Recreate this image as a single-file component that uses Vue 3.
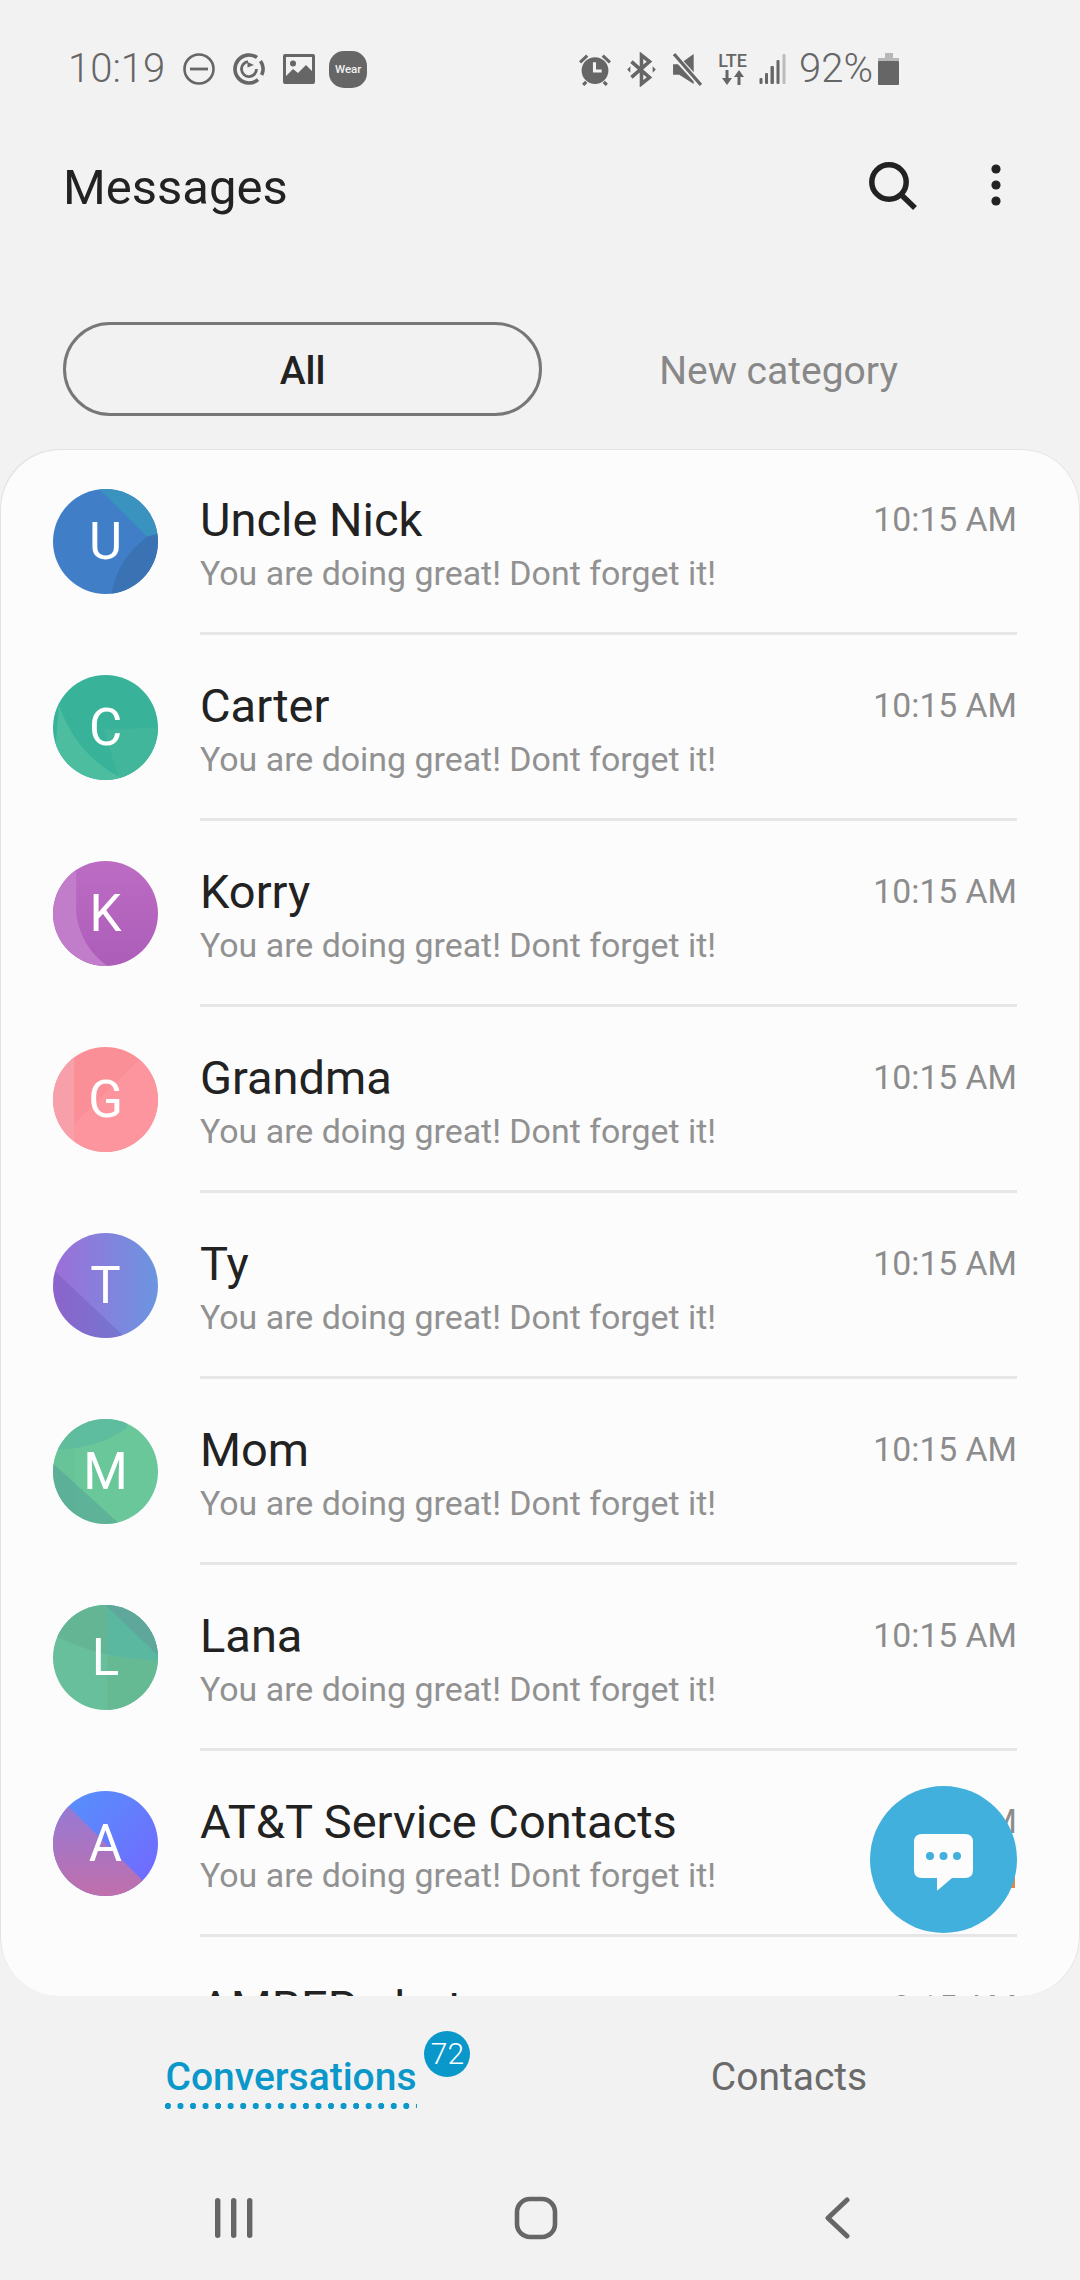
<script setup>
const msg = 'You are doing great! Dont forget it!'

const threads = [
  {
    name: 'Uncle Nick', letter: 'U', time: '10:15 AM', base: '#407fc8',
    shapes: [
      { d: 'M46 0 L94 48 L104 44 L104 0 Z', fill: '#3a93bf' },
      { d: 'M94 47 Q64 68 58 104 L104 104 L104 44 Z', fill: '#3a72b4' },
    ],
  },
  {
    name: 'Carter', letter: 'C', time: '10:15 AM', base: '#39b29a',
    shapes: [
      { d: 'M50 54 L104 52 L104 104 L66 104 Z', fill: '#41b69b' },
      { d: 'M6 30 Q24 82 72 104 L0 104 Z', fill: '#4cbe9f' },
    ],
  },
  {
    name: 'Korry', letter: 'K', time: '10:15 AM', base: 'url(#gKorry)',
    shapes: [
      { d: 'M0 0 L23 0 L23 52 Q28 86 54 104 L0 104 Z', fill: '#c17cca' },
    ],
  },
  {
    name: 'Grandma', letter: 'G', time: '10:15 AM', base: '#fb8f97',
    shapes: [
      { d: 'M21 76 L86 12 L104 12 L104 104 L21 104 Z', fill: '#fd959f' },
      { d: 'M0 0 L21 0 L21 104 L0 104 Z', fill: '#f8a0a9' },
    ],
  },
  {
    name: 'Ty', letter: 'T', time: '10:15 AM', base: 'url(#gTy)',
    shapes: [
      { d: 'M0 36 L72 104 L0 104 Z', fill: '#5a42a8', opacity: 0.25 },
    ],
  },
  {
    name: 'Mom', letter: 'M', time: '10:15 AM', base: '#6ac79a',
    shapes: [
      { d: 'M0 0 L76 0 L72 10 Q42 30 4 30 Z', fill: '#5ebc9f' },
      { d: 'M0 0 L22 0 L22 104 L0 104 Z', fill: '#63bd97', opacity: 0.4 },
      { d: 'M0 44 L66 104 L0 104 Z', fill: '#57a398', opacity: 0.6 },
    ],
  },
  {
    name: 'Lana', letter: 'L', time: '10:15 AM', base: '#68bf9b',
    shapes: [
      { d: 'M54 50 L104 55 L104 104 L54 104 Z', fill: '#65ba94' },
      { d: 'M0 0 L54 0 L54 49 Q30 44 0 30 Z', fill: '#64b594' },
      { d: 'M54 0 L104 0 L104 55 Q80 54 54 49 Z', fill: '#5ab7a0' },
      { d: 'M52 0 L104 50 L104 0 Z', fill: '#5fa79b' },
    ],
  },
  {
    name: 'AT&T Service Contacts', letter: 'A', time: '9:15 AM', base: 'url(#gAtBlue)', flag: true,
    shapes: [
      { d: 'M0 0 L104 104 L0 104 Z', fill: 'url(#gAtRose)' },
    ],
  },
  { name: 'AMBER alerts', letter: '', time: '9:15 AM', base: 'none', shapes: [] },
]
</script>

<template>
  <div class="screen">
    <svg class="defs" width="0" height="0" aria-hidden="true">
      <defs>
        <linearGradient id="gKorry" x1="0" y1="0" x2="0" y2="1">
          <stop offset="0" stop-color="#bc6cc3" />
          <stop offset="1" stop-color="#ac5db8" />
        </linearGradient>
        <linearGradient id="gTy" x1="0" y1="0" x2="1" y2="0">
          <stop offset="0" stop-color="#9d6ed8" />
          <stop offset="1" stop-color="#6b95e0" />
        </linearGradient>
        <linearGradient id="gAtBlue" x1="0" y1="0" x2="1" y2="1">
          <stop offset="0" stop-color="#5394fb" />
          <stop offset="1" stop-color="#7565ff" />
        </linearGradient>
        <linearGradient id="gAtRose" x1="0" y1="0" x2="0" y2="1">
          <stop offset="0" stop-color="#8f7bdb" />
          <stop offset="1" stop-color="#c06fab" />
        </linearGradient>
      </defs>
    </svg>

    <div class="status">
      <div class="status-left">
        <span class="clock">10:19</span>
        <svg width="32" height="32" viewBox="0 0 32 32">
          <circle cx="16" cy="16" r="14.5" fill="none" stroke="#666" stroke-width="2.6" />
          <rect x="7" y="14.6" width="18" height="2.8" fill="#666" />
        </svg>
        <svg width="32" height="32" viewBox="0 0 32 32" fill="none" stroke="#666">
          <path d="M24 4.500 A14 14 0 1 0 25 26.700" stroke-width="3.600" />
          <path d="M27.500 8 A14 14 0 0 1 28.700 21.900" stroke-width="3.600" />
          <path d="M15 8.600 A7.500 7.500 0 1 0 23.500 16" stroke-width="2.800" />
          <path d="M21 12 L14.500 14.500 L14.500 9 Z" fill="#666" stroke="none" />
        </svg>
        <svg width="32" height="30" viewBox="0 0 32 30">
          <path fill="#666" fill-rule="evenodd" d="M2 0 H30 Q32 0 32 2 V28 Q32 30 30 30 H2 Q0 30 0 28 V2 Q0 0 2 0 Z M3 3 V22 L10 15 L15 19 L23 11 L29 17 V3 Z" />
          <circle cx="10" cy="9.500" r="3" fill="#666" />
        </svg>
        <div class="wear"><span>Wear</span></div>
      </div>
      <div class="status-right">
        <svg width="34" height="33" viewBox="0 0 33 32">
          <circle cx="16.500" cy="17" r="13" fill="#666" />
          <path d="M16 9 V17.500 H23" fill="none" stroke="#f2f2f2" stroke-width="3" />
          <path d="M2 9 L9 2.500 M31 9 L24 2.500 M5 31 L8 28 M28 31 L25 28" stroke="#666" stroke-width="3" />
        </svg>
        <svg width="29" height="35" viewBox="0 0 27 33" fill="none" stroke="#666" stroke-width="3.400">
          <path d="M4 9 L21 24 L13.500 30 V3 L21 9 L4 24" />
          <path d="M0 16.500 L3 13.500 V19.500 Z M27 16.500 L24 13.500 V19.500 Z" fill="#666" stroke="none" />
        </svg>
        <svg class="mute" width="29" height="33" viewBox="0 0 28 32">
          <path fill="#666" d="M0 11 H6 L20 1 V30 L6 21 H0 Z" />
          <path d="M-1 0 L29 33" stroke="#f2f2f2" stroke-width="6" />
          <path d="M1 1 L27 31" stroke="#666" stroke-width="3" />
        </svg>
        <div class="lte">
          <span>LTE</span>
          <svg width="24" height="16" viewBox="0 0 24 16" fill="#666">
            <path d="M4.500 0 H7.500 V8 H11 L6 15 L1 8 H4.500 Z" />
            <path d="M16.500 15 H19.500 V7 H23 L18 0 L13 7 H16.500 Z" />
          </svg>
        </div>
        <svg class="signal" width="27" height="30" viewBox="0 0 26 30">
          <rect x="0" y="24" width="3" height="6" rx="1" fill="#666" />
          <rect x="5.500" y="19" width="3" height="11" rx="1" fill="#666" />
          <rect x="11" y="12" width="3.400" height="18" rx="1" fill="#666" />
          <rect x="17" y="6" width="3" height="24" rx="1" fill="#666" />
          <rect x="23" y="0" width="3" height="30" rx="1" fill="#bbb" />
        </svg>
        <span class="pct">92%</span>
        <svg class="batt" width="21" height="32" viewBox="0 0 21 32">
          <rect x="7" y="0" width="8" height="6" fill="#b8b8b8" />
          <rect x="0" y="5" width="21" height="3" fill="#b8b8b8" />
          <rect x="0" y="8" width="21" height="24" rx="1" fill="#666" />
        </svg>
      </div>
    </div>

    <div class="header">
      <span class="title">Messages</span>
      <div class="actions">
        <svg width="52" height="54" viewBox="0 0 52 54" fill="none" stroke="#222" stroke-width="5.500">
          <circle cx="23" cy="24" r="17.200" />
          <path d="M35.500 37 L49 50" />
        </svg>
        <svg width="10" height="42" viewBox="0 0 10 42" fill="#222">
          <circle cx="5" cy="5" r="4.600" />
          <circle cx="5" cy="21" r="4.600" />
          <circle cx="5" cy="37" r="4.600" />
        </svg>
      </div>
    </div>

    <div class="filters">
      <div class="filter active">All</div>
      <div class="filter">New category</div>
    </div>

    <div class="card">
      <div v-for="t in threads" :key="t.name" class="row">
        <div class="avatar">
          <svg width="105" height="105" viewBox="0 0 104 104">
            <rect width="104" height="104" :fill="t.base" />
            <path v-for="(s, i) in t.shapes" :key="i" :d="s.d" :fill="s.fill" :opacity="s.opacity" />
          </svg>
          <span v-if="t.letter" class="letter">{{ t.letter }}</span>
        </div>
        <div class="body">
          <div class="line">
            <span class="name">{{ t.name }}</span>
            <span class="time">{{ t.time }}</span>
          </div>
          <div class="sub">{{ msg }}</div>
          <span v-if="t.flag" class="flag"></span>
        </div>
      </div>
      <div class="fab">
        <svg width="147" height="147" viewBox="0 0 147 147">
          <path fill="#fcfcfc" d="M52 48 H95 Q103 48 103 56 V84 Q103 92 95 92 H82 L68 104 Q67 105 67 103 V92 H52 Q44 92 44 84 V56 Q44 48 52 48 Z" />
          <circle cx="60" cy="70" r="4" fill="#42b0dc" />
          <circle cx="73.500" cy="70" r="4" fill="#42b0dc" />
          <circle cx="87" cy="70" r="4" fill="#42b0dc" />
        </svg>
      </div>
    </div>

    <div class="tabs">
      <div class="tab">
        <div class="tab-on">
          <span>Conversations</span>
          <div class="dots"></div>
          <span class="badge">72</span>
        </div>
      </div>
      <div class="tab">Contacts</div>
    </div>

    <div class="nav">
      <div class="nav-cell">
        <svg width="38" height="44" viewBox="0 0 38 44" fill="#666">
          <rect x="0" y="2" width="5.400" height="40" rx="2.700" />
          <rect x="16" y="2" width="5.400" height="40" rx="2.700" />
          <rect x="32" y="2" width="5.400" height="40" rx="2.700" />
        </svg>
      </div>
      <div class="nav-cell">
        <svg width="44" height="44" viewBox="0 0 44 44">
          <rect x="3" y="3" width="38" height="38" rx="13" fill="none" stroke="#666" stroke-width="4.600" />
        </svg>
      </div>
      <div class="nav-cell">
        <svg width="26" height="44" viewBox="0 0 26 44">
          <path d="M22 4 L3 22 L22 40" fill="none" stroke="#666" stroke-width="5" stroke-linecap="round" stroke-linejoin="round" />
        </svg>
      </div>
    </div>
  </div>
</template>

<style>
html, body {
  margin: 0;
  background: #f2f2f2;
}
</style>

<style scoped>
.screen {
  width: 1080px;
  height: 2280px;
  display: flex;
  flex-direction: column;
  background: #f2f2f2;
  font-family: Roboto, "Liberation Sans", sans-serif;
  overflow: hidden;
}

.defs {
  position: absolute;
}

.status {
  height: 58px;
  padding: 40px 181px 0 68px;
  display: flex;
  justify-content: space-between;
  align-items: center;
  color: #666;
}

.status-left,
.status-right {
  display: flex;
  align-items: center;
}

.status-left {
  gap: 18px;
}

.status-right {
  gap: 15px;
}

.clock,
.pct {
  font-size: 40px;
  font-weight: 300;
  line-height: 58px;
}

.wear {
  width: 38px;
  height: 37px;
  margin-left: -4px;
  border-radius: 15px;
  background: #666;
  display: flex;
  align-items: center;
  justify-content: center;
  color: #f2f2f2;
  font-size: 11.500px;
  font-weight: 500;
}

.mute {
  margin-left: 2px;
}

.lte {
  width: 31px;
  display: flex;
  flex-direction: column;
  align-items: center;
  font-size: 18px;
  font-weight: 500;
  line-height: 16px;
  color: #666;
}

.lte svg {
  margin-top: 1px;
}

.signal {
  margin-left: -4px;
}

.pct {
  margin-left: -2px;
}

.batt {
  margin-left: -10px;
}

.header {
  height: 178px;
  padding: 0 79px 0 63px;
  display: flex;
  align-items: center;
  justify-content: space-between;
}

.title {
  font-size: 49px;
  color: #222;
}

.actions {
  margin-top: -4px;
  display: flex;
  align-items: center;
  gap: 73px;
}

.filters {
  margin-top: 46px;
  height: 94px;
  padding: 0 65px 0 63px;
  display: flex;
}

.filter {
  flex: 1;
  box-sizing: border-box;
  padding-top: 3px;
  display: flex;
  align-items: center;
  justify-content: center;
  font-size: 39px;
  color: #888;
}

.filter.active {
  border: 3px solid #777;
  border-radius: 47px;
  color: #222;
  font-weight: 500;
}

.card {
  position: relative;
  margin-top: 33px;
  height: 1547px;
  overflow: hidden;
  background: #fcfcfc;
  border-radius: 60px;
  box-shadow: inset 1px 1px 0 #e2e2e2, inset -1px 0 0 #e2e2e2;
}

.row {
  height: 186px;
  padding-left: 53px;
  display: flex;
}

.avatar {
  position: relative;
  width: 105px;
  height: 105px;
  margin-top: 40px;
  margin-right: 42px;
  flex-shrink: 0;
  overflow: hidden;
  border-radius: 50%;
  display: flex;
  align-items: center;
  justify-content: center;
}

.avatar svg {
  position: absolute;
  inset: 0;
}

.letter {
  position: relative;
  font-size: 51px;
  color: #fff;
}

.body {
  position: relative;
  flex: 1;
  margin-right: 63px;
  padding-top: 43px;
  border-bottom: 3px solid #e6e6e6;
}

.line {
  display: flex;
  justify-content: space-between;
  align-items: flex-start;
  height: 58px;
}

.name {
  font-size: 47px;
  line-height: 56px;
  color: #222;
}

.time {
  margin-top: 6px;
  font-size: 33.700px;
  line-height: 44px;
  color: #8c8c8c;
}

.sub {
  margin-top: 4px;
  font-size: 33.900px;
  line-height: 40px;
  color: #919191;
}

.flag {
  position: absolute;
  right: 2px;
  top: 126px;
  width: 20px;
  height: 11px;
  background: #e8854a;
}

.fab {
  position: absolute;
  right: 63px;
  bottom: 63px;
  width: 147px;
  height: 147px;
  border-radius: 50%;
  background: #42b0dc;
}

.tabs {
  height: 154px;
  padding: 0 42px;
  display: flex;
}

.tab {
  flex: 1;
  padding-top: 57px;
  display: flex;
  justify-content: center;
  font-size: 39px;
  line-height: 48px;
  color: #6a6a6a;
}

.tab-on {
  position: relative;
  color: #0a97c9;
  font-weight: 500;
  height: 48px;
}

.dots {
  height: 6px;
  margin-top: 2px;
  background-image: radial-gradient(circle at 3px 3px, #0a97c9 2.900px, transparent 3.300px);
  background-size: 12.550px 6px;
  background-repeat: repeat-x;
}

.badge {
  position: absolute;
  left: 259px;
  top: -22px;
  width: 46px;
  height: 46px;
  border-radius: 50%;
  background: #0a97c9;
  color: #fff;
  font-size: 30px;
  font-weight: 300;
  line-height: 46px;
  text-align: center;
}

.nav {
  flex: 1;
  padding: 46px 91px 0 83px;
  display: flex;
  align-items: flex-start;
}

.nav-cell {
  flex: 1;
  display: flex;
  justify-content: center;
}
</style>
